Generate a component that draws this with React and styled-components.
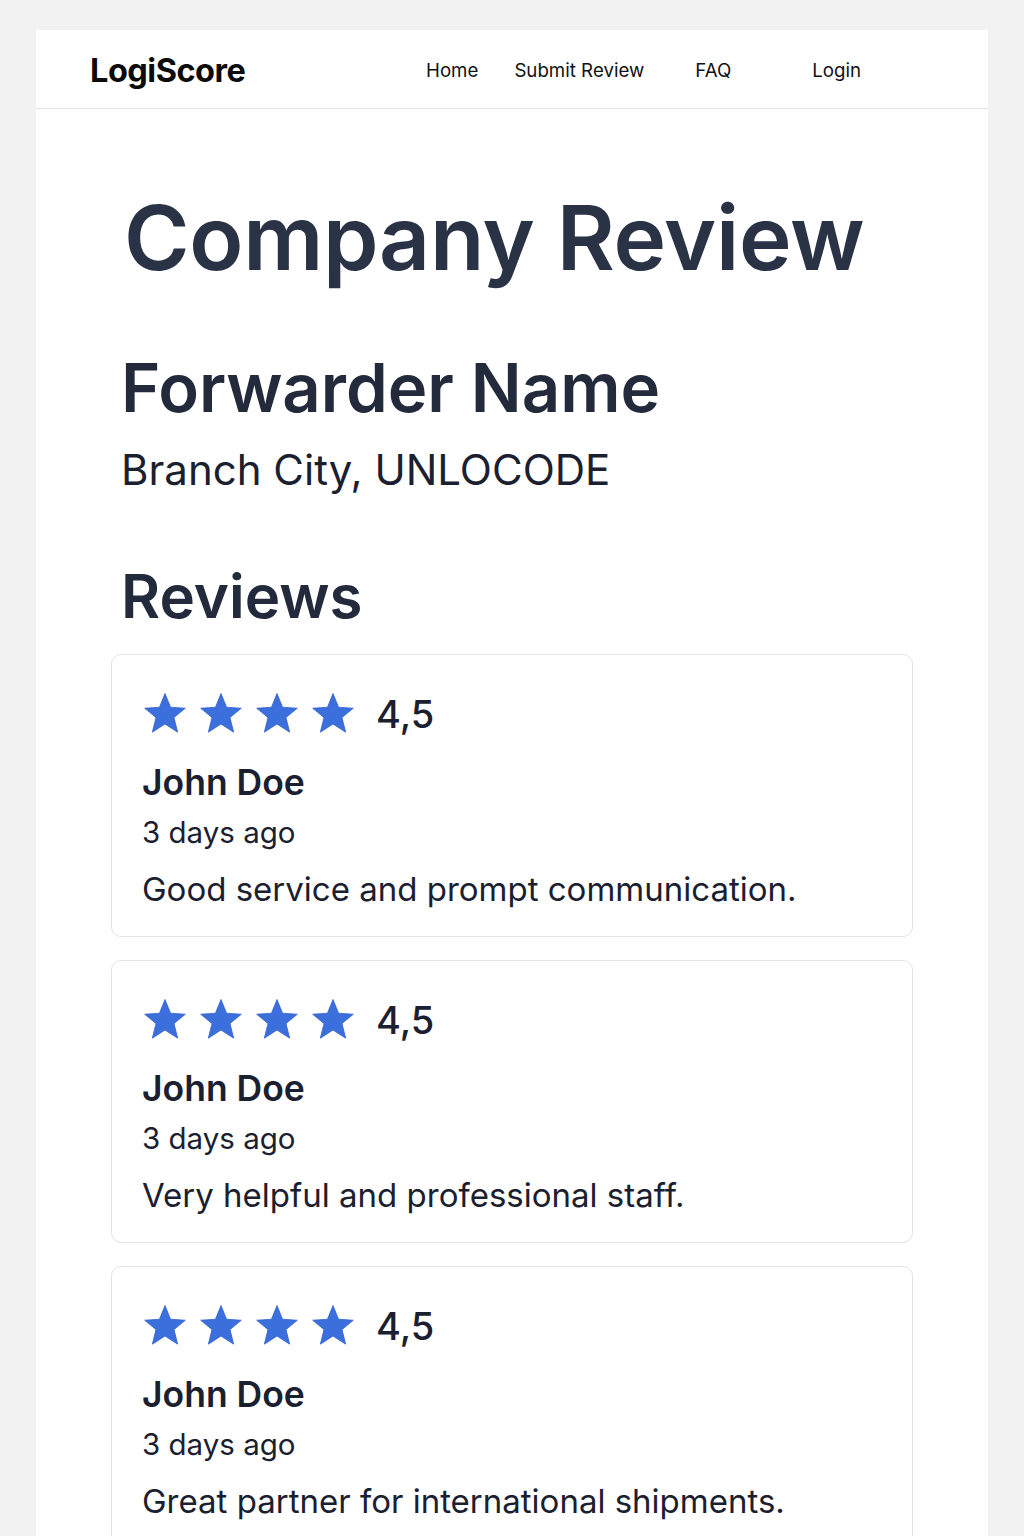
import React from 'react'
import styled, { createGlobalStyle } from 'styled-components'

const GlobalStyle = createGlobalStyle`
  html, body {
    margin: 0;
    padding: 0;
    background: #f2f2f2;
  }
  body {
    font-family: Inter, "Noto Sans", sans-serif;
    color: #1b2030;
  }
`

const Page = styled.div`
  padding: 30px 36px 0;
  height: 1536px;
  box-sizing: border-box;
  overflow: hidden;
`

const Panel = styled.div`
  background: #fff;
  height: 100%;
  overflow: hidden;
`

const Header = styled.header`
  display: flex;
  align-items: center;
  height: 79px;
  padding: 2px 54px 0;
  box-sizing: border-box;
  border-bottom: 1px solid #e4e4e4;
`

const Logo = styled.div`
  font-size: 32.5px;
  font-weight: 700;
  letter-spacing: -0.5px;
  color: #0b0b0b;
  margin-right: auto;
`

const Nav = styled.nav`
  display: flex;
  align-items: center;
  margin-right: 73px;
`

const NavLink = styled.a`
  font-size: 18.7px;
  color: #111;
  text-decoration: none;
  margin-left: ${p => p.gap || 0}px;
`

const Main = styled.main`
  padding: 84px 75px 0 75px;
`

const Title = styled.h1`
  margin: 0 0 0 13px;
  font-size: 89px;
  font-weight: 600;
  line-height: 1;
  white-space: nowrap;
  color: #2a3245;
  letter-spacing: -0.3px;
`

const Company = styled.h2`
  margin: 72px 0 0 10px;
  font-size: 67px;
  font-weight: 600;
  line-height: 1;
  color: #232a3b;
`

const Branch = styled.div`
  margin: 28px 0 0 10px;
  font-size: 42px;
  font-weight: 400;
  line-height: 1;
  color: #1b2030;
`

const SectionTitle = styled.h3`
  margin: 75px 0 0 10px;
  font-size: 60px;
  font-weight: 600;
  line-height: 1;
  color: #232a3b;
`

const ReviewList = styled.div`
  display: flex;
  flex-direction: column;
  gap: 23px;
  margin-top: 28px;
`

const Card = styled.div`
  border: 1px solid #e3e3e3;
  border-radius: 10px;
  padding: 34px 30px 26px;
  height: 283px;
  box-sizing: border-box;
  flex-shrink: 0;
`

const RatingRow = styled.div`
  display: flex;
  align-items: center;
  gap: 10px;
`

const Star = styled.svg`
  width: 46px;
  height: 46px;
  display: block;
`

const Score = styled.span`
  font-size: 38px;
  font-weight: 500;
  margin-left: 10px;
  padding-top: 2px;
  color: #1b2030;
`

const Author = styled.div`
  margin-top: 24px;
  font-size: 35.5px;
  font-weight: 600;
  color: #1b2030;
`

const Time = styled.div`
  margin-top: 10px;
  font-size: 29.5px;
  color: #1b2030;
`

const Comment = styled.p`
  margin: 19px 0 0;
  font-size: 33px;
  color: #1b2030;
`

const StarIcon = () => (
  <Star viewBox="0 0 24 24">
    <path
      d="M12 1.8l2.9 7.2 7.7.5-5.9 4.9 1.9 7.6L12 17.8l-6.6 4.2 1.9-7.6-5.9-4.9 7.7-.5z"
      fill="#3b6fdc"
      stroke="#2f5fd0"
      strokeWidth="0.4"
      strokeLinejoin="round"
    />
  </Star>
)

const reviews = [
  'Good service and prompt communication.',
  'Very helpful and professional staff.',
  'Great partner for international shipments.',
]

export default function App() {
  return (
    <Page>
      <GlobalStyle />
      <Panel>
        <Header>
          <Logo>LogiScore</Logo>
          <Nav>
            <NavLink href="#">Home</NavLink>
            <NavLink href="#" gap={36}>Submit Review</NavLink>
            <NavLink href="#" gap={51}>FAQ</NavLink>
            <NavLink href="#" gap={81}>Login</NavLink>
          </Nav>
        </Header>
        <Main>
          <Title>Company Review</Title>
          <Company>Forwarder Name</Company>
          <Branch>Branch City, UNLOCODE</Branch>
          <SectionTitle>Reviews</SectionTitle>
          <ReviewList>
            {reviews.map((text, i) => (
              <Card key={i}>
                <RatingRow>
                  <StarIcon />
                  <StarIcon />
                  <StarIcon />
                  <StarIcon />
                  <Score>4,5</Score>
                </RatingRow>
                <Author>John Doe</Author>
                <Time>3 days ago</Time>
                <Comment>{text}</Comment>
              </Card>
            ))}
          </ReviewList>
        </Main>
      </Panel>
    </Page>
  )
}
